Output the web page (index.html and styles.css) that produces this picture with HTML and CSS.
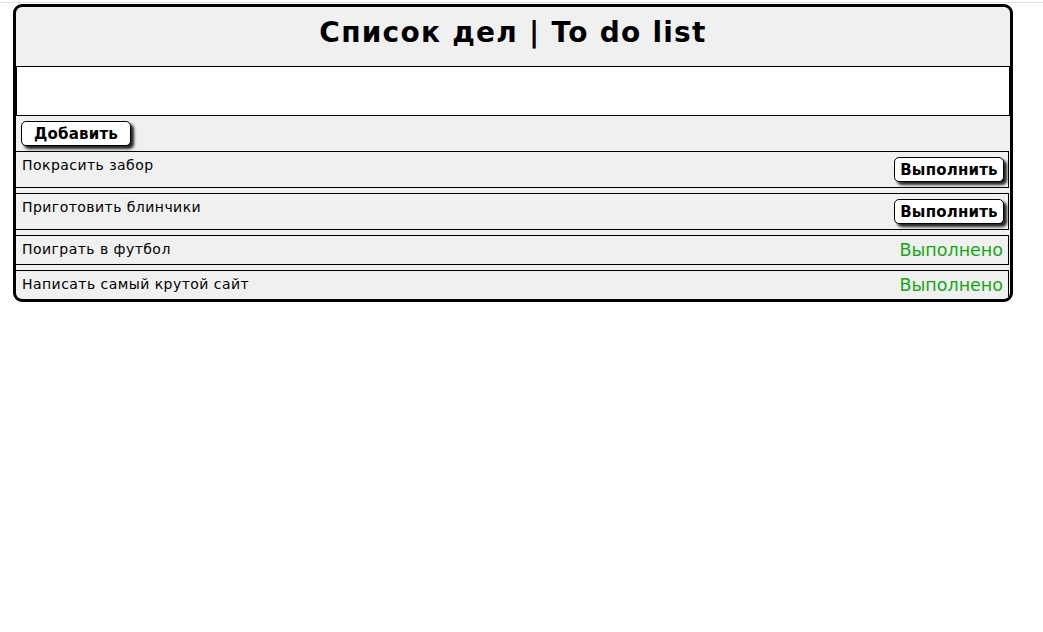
FILE: index.html
```html
<!DOCTYPE html>
<html lang="ru">
<head>
<meta charset="utf-8">
<title>Список дел | To do list</title>
<link rel="stylesheet" href="styles.css">
</head>
<body>
<div class="topline"></div>
<div class="todo">
  <h1 class="title">Список дел | To do list</h1>
  <input class="new-task" type="text">
  <div class="add-row"><button class="btn">Добавить</button></div>
  <ul class="list">
    <li class="item"><span class="item-text">Покрасить забор</span><button class="btn">Выполнить</button></li>
    <li class="item"><span class="item-text">Приготовить блинчики</span><button class="btn">Выполнить</button></li>
    <li class="item"><span class="item-text">Поиграть в футбол</span><span class="done">Выполнено</span></li>
    <li class="item"><span class="item-text">Написать самый крутой сайт</span><span class="done">Выполнено</span></li>
  </ul>
</div>
</body>
</html>
```
FILE: styles.css
```css
html, body {
  margin: 0;
  padding: 0;
  background: #fff;
  font-family: "DejaVu Sans", Verdana, sans-serif;
  color: #000;
}
.topline {
  height: 1px;
  background: #e2e2e2;
  margin-top: 2px;
}
.todo {
  width: 994px;
  margin: 1px 0 0 13px;
  border: 3px solid #000;
  border-radius: 9px;
  background: #f0f0f0;
  overflow: hidden;
}
.title {
  margin: 0;
  height: 59px;
  box-sizing: border-box;
  padding-bottom: 8px;
  display: flex;
  align-items: center;
  justify-content: center;
  font-size: 28px;
  letter-spacing: 1.25px;
  font-weight: bold;
}
.new-task {
  display: block;
  box-sizing: border-box;
  width: 994px;
  height: 50px;
  margin: 0;
  border: 1px solid #000;
  background: #fff;
  font: inherit;
  padding: 0 6px;
  outline: none;
}
.add-row {
  height: 35px;
  padding: 5px 0 0 5px;
  box-sizing: border-box;
}
.btn {
  width: 110px;
  height: 25px;
  padding: 0;
  background: #fff;
  border: 1px solid #000;
  border-radius: 5px;
  box-shadow: 3px 3px 3px #222;
  font-family: "DejaVu Sans", Verdana, sans-serif;
  font-size: 15px;
  letter-spacing: 0.2px;
  font-weight: bold;
  color: #000;
  cursor: pointer;
}
.list {
  list-style: none;
  margin: 0;
  padding: 0;
}
.item {
  display: flex;
  justify-content: space-between;
  align-items: flex-start;
  border: 1px solid #000;
  border-left: 0;
  border-right: 1px solid #000;
  width: 993px;
  padding: 5px 4px 5px 6px;
  box-sizing: border-box;
  margin-bottom: 5px;
}
.item:last-child {
  margin-bottom: 0;
  border-bottom: 0;
}
.item-text {
  font-size: 14px;
  letter-spacing: 0.45px;
  line-height: 16px;
  padding-top: 0;
}
.done {
  font-size: 17.5px;
  line-height: 17px;
  color: #11aa11;
  padding-top: 1px;
  margin-right: 1px;
}
```
